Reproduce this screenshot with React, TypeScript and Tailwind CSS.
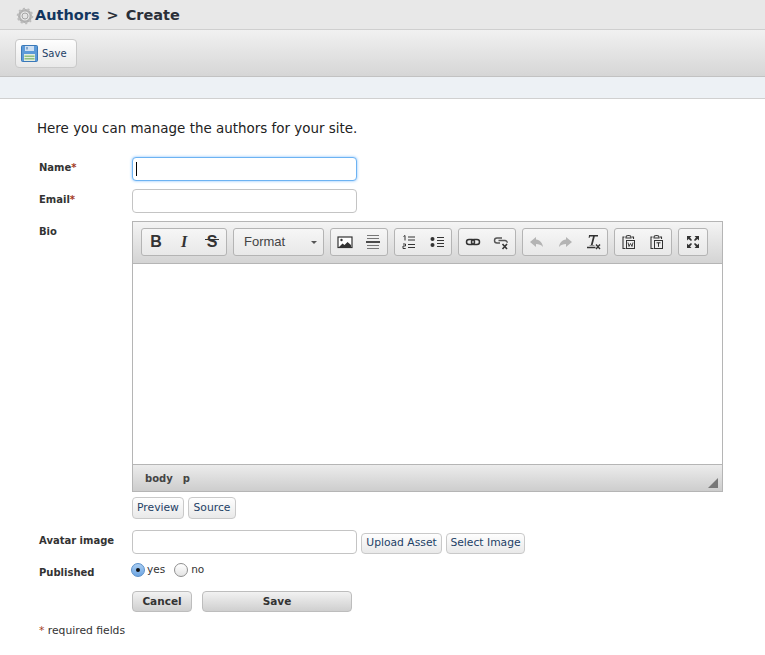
// App.tsx
import React from 'react';

const font = "font-['DejaVu_Sans',sans-serif]";
const softBtn = "rounded-[4px] border border-[#c9c9c9] bg-gradient-to-b from-[#fefefe] to-[#e9e9e9] text-[10.75px] text-[#1d3f66]";
const darkBtn = "rounded-[4px] border border-[#bdbdbd] bg-gradient-to-b from-[#f2f2f2] to-[#cfcfcf] text-[10.5px] font-bold text-[#333]";

const Gear = () => (
  <svg width="18" height="18" viewBox="0 0 18 18">
    <circle cx="9" cy="9" r="5.800" fill="none" stroke="#b0b0b0" strokeWidth="2.400" />
    <circle cx="9" cy="9" r="7" fill="none" stroke="#bcbcbc" strokeWidth="2.600" strokeDasharray="2 2.400" />
    <circle cx="9" cy="9" r="3" fill="#e4e4e4" stroke="#a5a5a5" />
  </svg>
);

const Floppy = () => (
  <svg width="17" height="17" viewBox="0 0 17 17">
    <rect x="0.5" y="0.5" width="16" height="16" rx="1" fill="#5c9ad8" stroke="#3a78b8" />
    <rect x="4" y="1" width="9" height="5" fill="#cfe0f2" />
    <rect x="5.500" y="2" width="1" height="2.500" fill="#3a6ea5" />
    <rect x="3" y="9" width="11" height="7" fill="#e3ecdf" />
    <rect x="3.500" y="10.500" width="10" height="1.500" fill="#8fbf7f" />
    <rect x="3.500" y="13" width="10" height="1.500" fill="#8fbf7f" />
  </svg>
);

const ic = { width: 16, height: 16, viewBox: '0 0 16 16' };

const ImageIcon = () => (
  <svg {...ic}>
    <rect x="1" y="3" width="14" height="10.500" fill="#fff" stroke="#333" strokeWidth="1.200" />
    <circle cx="4.500" cy="6" r="1.200" fill="#333" />
    <path d="M2 13l3.500-3.500 2 1.500 3-3 3.500 3v2z" fill="#333" />
  </svg>
);
const HrIcon = () => (
  <svg {...ic}>
    <path d="M2 1.500h12M2 4.500h12M2 11.500h12M2 14.500h12" stroke="#777" strokeWidth="1" />
    <path d="M1 8h14" stroke="#222" strokeWidth="1.600" />
  </svg>
);
const NumList = () => (
  <svg {...ic}>
    <path d="M2.500 2.500l1.500-1v5" fill="none" stroke="#333" strokeWidth="1" />
    <path d="M2 10h2.500v2H2v2.500h2.700" fill="none" stroke="#333" strokeWidth="1" />
    <path d="M7 3h7M7 6h7M7 10.500h7M7 13.500h7" stroke="#333" strokeWidth="1.200" />
  </svg>
);
const BulList = () => (
  <svg {...ic}>
    <circle cx="3.500" cy="5" r="2" fill="#333" />
    <circle cx="3.500" cy="11" r="2" fill="#333" />
    <path d="M8 3.500h7M8 6.500h7M8 9.500h7M8 12.500h7" stroke="#333" strokeWidth="1.200" />
  </svg>
);
const LinkIcon = () => (
  <svg {...ic}>
    <rect x="1.500" y="5.500" width="8" height="5" rx="2.500" fill="none" stroke="#333" strokeWidth="1.500" />
    <rect x="6.500" y="5.500" width="8" height="5" rx="2.500" fill="none" stroke="#333" strokeWidth="1.500" />
  </svg>
);
const UnlinkIcon = () => (
  <svg {...ic}>
    <path d="M9 4H4a2.500 2.500 0 000 5h3" fill="none" stroke="#555" strokeWidth="1.400" />
    <path d="M5.500 6.500H12a2.300 2.300 0 012.300 2.300" fill="none" stroke="#555" strokeWidth="1.400" />
    <path d="M9.500 10l4.500 5M14 10l-4.500 5" stroke="#333" strokeWidth="1.600" />
  </svg>
);
const Undo = () => (
  <svg {...ic}>
    <path d="M7 3L1 8l6 5v-3c3 0 5 .8 7 3-.4-4-3-7-7-7.500z" fill="#b4b4b4" />
  </svg>
);
const Redo = () => (
  <svg {...ic}>
    <path d="M9 3l6 5-6 5v-3c-3 0-5 .8-7 3 .4-4 3-7 7-7.500z" fill="#b4b4b4" />
  </svg>
);
const ClearFormat = () => (
  <svg {...ic}>
    <path d="M4 1h9v1.600h-3.200L7.600 11H9.400v.6H4.600V11h1.200L8 2.600H5L4.400 4H3.700z" fill="#333" />
    <path d="M2 13.500h8.500" stroke="#333" strokeWidth="1.500" />
    <path d="M11 10.500l4 4.500M15 10.500l-4 4.500" stroke="#333" strokeWidth="1.400" />
  </svg>
);
const PasteBase = () => (
  <path d="M3.500 3H2v11.500h2.500M11 3h1.500v2M5 3a2.500 1.500 0 015 0v1H5z" fill="none" stroke="#333" strokeWidth="1.100" />
);
const PasteWord = () => (
  <svg {...ic}>
    <PasteBase />
    <rect x="5.500" y="6.500" width="8" height="8" fill="none" stroke="#333" />
    <path d="M7 8.500l1 4 1.500-3 1.500 3 1-4" fill="none" stroke="#333" strokeWidth="0.900" />
  </svg>
);
const PasteText = () => (
  <svg {...ic}>
    <PasteBase />
    <rect x="5.500" y="6.500" width="8" height="8" fill="none" stroke="#333" />
    <path d="M7.500 8.800h4M9.500 8.800v4" fill="none" stroke="#333" />
  </svg>
);
const Fullscreen = () => (
  <svg {...ic}>
    <path d="M2 2h4.500L5 3.500 7 6 6 7 3.500 5 2 6.500zM14 2v4.500L12.500 5 10 7 9 6l2-2.500L9.500 2zM2 14V9.500L3.500 11 6 9l1 1-2 2.500L6.500 14zM14 14H9.500l1.500-1.500L9 10l1-1 2.500 2L14 9.500z" fill="#333" />
  </svg>
);

const Cell = ({ children }: { children: React.ReactNode }) => (
  <div className="flex flex-1 items-center justify-center">{children}</div>
);

const Group = ({ w, children }: { w: string; children: React.ReactNode }) => (
  <div className={`flex h-[28px] ${w} rounded-[3px] border border-[#b4b4b4] bg-gradient-to-b from-[#f6f6f6] to-[#e8e8e8]`}>
    {children}
  </div>
);

const Field = ({ label, required, children, className }: { label: string; required?: boolean; children: React.ReactNode; className?: string }) => (
  <div className={`flex ${className ?? ''}`}>
    <div className="w-[93px] shrink-0 pt-[4px] text-[10px] font-bold leading-[14px] text-[#333]">
      {label}
      {required && <span className="text-[#a33a22]">*</span>}
    </div>
    <div className="min-w-0 flex-1">{children}</div>
  </div>
);

export default function App() {
  return (
    <div className={`h-[655px] w-[765px] overflow-hidden bg-white ${font}`}>
      {/* Title */}
      <div className="flex h-[30px] items-center gap-[1px] border-b border-[#cfcfcf] bg-[#e8e8e8] pl-[16px] pt-[2px] text-[14.500px] font-bold">
        <Gear />
        <span className="text-[#13365f]">Authors</span>
        <span className="ml-[6px] text-[#2a2f38]">&gt;</span>
        <span className="ml-[6px] text-[#2a2f38]">Create</span>
      </div>

      {/* Toolbar */}
      <div className="flex h-[47px] items-start border-b border-[#c2c2c2] bg-gradient-to-b from-[#f1f1f1] to-[#d6d6d6] pl-[15px] pt-[9px]">
        <button className={`flex h-[29px] w-[62px] items-center gap-[4px] pl-[5px] !text-[10px] ${softBtn}`}>
          <Floppy />
          <span>Save</span>
        </button>
      </div>

      <div className="h-[22px] border-b border-[#d0d0d0] bg-[#edf1f5]" />

      <div className="pl-[37px] pt-[19px]">
        <p className="text-[13.450px] leading-[22px] text-[#222]">Here you can manage the authors for your site.</p>

        <div className="mt-[17px] pl-[2px]">
          <Field label="Name" required>
            <div className="relative h-[24px] w-[225px] rounded-[4px] border border-[#6db3f2] bg-white shadow-[0_0_3px_#7fbfff]">
              <div className="absolute left-[3px] top-[4px] h-[14px] w-[1px] bg-black" />
            </div>
          </Field>
          <Field label="Email" required className="mt-[8px]">
            <div className="h-[24px] w-[225px] rounded-[4px] border border-[#c4c4c4] bg-white" />
          </Field>
          <Field label="Bio" className="mt-[8px]">
            <div className="w-[591px] border border-[#b5b5b5]">
              <div className="flex h-[42px] items-start gap-[6px] border-b border-[#b5b5b5] bg-gradient-to-b from-[#f4f4f4] to-[#d4d4d4] pl-[8px] pt-[6px]">
                <Group w="w-[86px]">
                  <Cell><span className="font-['Liberation_Sans',sans-serif] text-[16px] font-bold text-[#333]">B</span></Cell>
                  <Cell><span className="font-['Liberation_Serif',serif] text-[16px] font-bold italic text-[#333]">I</span></Cell>
                  <Cell>
                    <span className="relative font-['Liberation_Sans',sans-serif] text-[16px] font-bold text-[#333]">
                      S
                      <span className="absolute left-[-2px] right-[-2px] top-[9px] h-[1px] bg-[#333]" />
                    </span>
                  </Cell>
                </Group>
                <Group w="w-[91px]">
                  <div className="flex flex-1 items-center justify-between pl-[10px] pr-[6px] font-['Liberation_Sans',sans-serif] text-[13px] text-[#444]">
                    <span>Format</span>
                    <span className="h-0 w-0 border-x-[3px] border-t-[3px] border-x-transparent border-t-[#555]" />
                  </div>
                </Group>
                <Group w="w-[58px]">
                  <Cell><ImageIcon /></Cell>
                  <Cell><HrIcon /></Cell>
                </Group>
                <Group w="w-[58px]">
                  <Cell><NumList /></Cell>
                  <Cell><BulList /></Cell>
                </Group>
                <Group w="w-[58px]">
                  <Cell><LinkIcon /></Cell>
                  <Cell><UnlinkIcon /></Cell>
                </Group>
                <Group w="w-[86px]">
                  <Cell><Undo /></Cell>
                  <Cell><Redo /></Cell>
                  <Cell><ClearFormat /></Cell>
                </Group>
                <Group w="w-[58px]">
                  <Cell><PasteWord /></Cell>
                  <Cell><PasteText /></Cell>
                </Group>
                <Group w="w-[30px]">
                  <Cell><Fullscreen /></Cell>
                </Group>
              </div>
              <div className="h-[200px] bg-white" />
              <div className="relative flex h-[27px] items-center gap-[10px] border-t border-[#b5b5b5] bg-gradient-to-b from-[#ececec] to-[#cdcdcd] pl-[12px] text-[10px] font-bold text-[#444]">
                <span>body</span>
                <span>p</span>
                <div className="absolute bottom-[3px] right-[4px] h-0 w-0 border-b-[10px] border-l-[10px] border-b-[#777] border-l-transparent" />
              </div>
            </div>
            <div className="mt-[5px] flex gap-[4px]">
              <button className={`h-[22px] w-[52px] ${softBtn}`}>Preview</button>
              <button className={`h-[22px] w-[48px] ${softBtn}`}>Source</button>
            </div>
          </Field>
          <Field label="Avatar image" className="mt-[11px]">
            <div className="flex items-center gap-[4px]">
              <div className="h-[24px] w-[225px] rounded-[4px] border border-[#c4c4c4] bg-white" />
              <button className={`mt-[3px] h-[21px] w-[81px] ${softBtn}`}>Upload Asset</button>
              <button className={`mt-[3px] h-[21px] w-[79px] ${softBtn}`}>Select Image</button>
            </div>
          </Field>
          <Field label="Published" className="mt-[8px]">
            <div className="-ml-[1px] flex items-center text-[10.500px] text-[#333]">
              <span className="flex h-[14px] w-[14px] items-center justify-center rounded-full border border-[#5a8fc8] bg-gradient-to-b from-[#a9cdf2] to-[#6ea6e3]">
                <span className="h-[4px] w-[4px] rounded-full bg-[#111]" />
              </span>
              <span className="ml-[2px]">yes</span>
              <span className="ml-[9px] h-[14px] w-[14px] rounded-full border border-[#8f8f8f] bg-gradient-to-b from-[#fff] to-[#e4e4e4]" />
              <span className="ml-[3px]">no</span>
            </div>
          </Field>
          <Field label="" className="mt-[11px]">
            <div className="flex gap-[10px]">
              <button className={`h-[21px] w-[60px] ${darkBtn}`}>Cancel</button>
              <button className={`h-[21px] w-[150px] ${darkBtn}`}>Save</button>
            </div>
          </Field>
          <p className="mt-[12px] text-[10.750px] leading-[14px] text-[#333]">
            <span className="text-[#a33a22]">*</span> required fields
          </p>
        </div>
      </div>
    </div>
  );
}
